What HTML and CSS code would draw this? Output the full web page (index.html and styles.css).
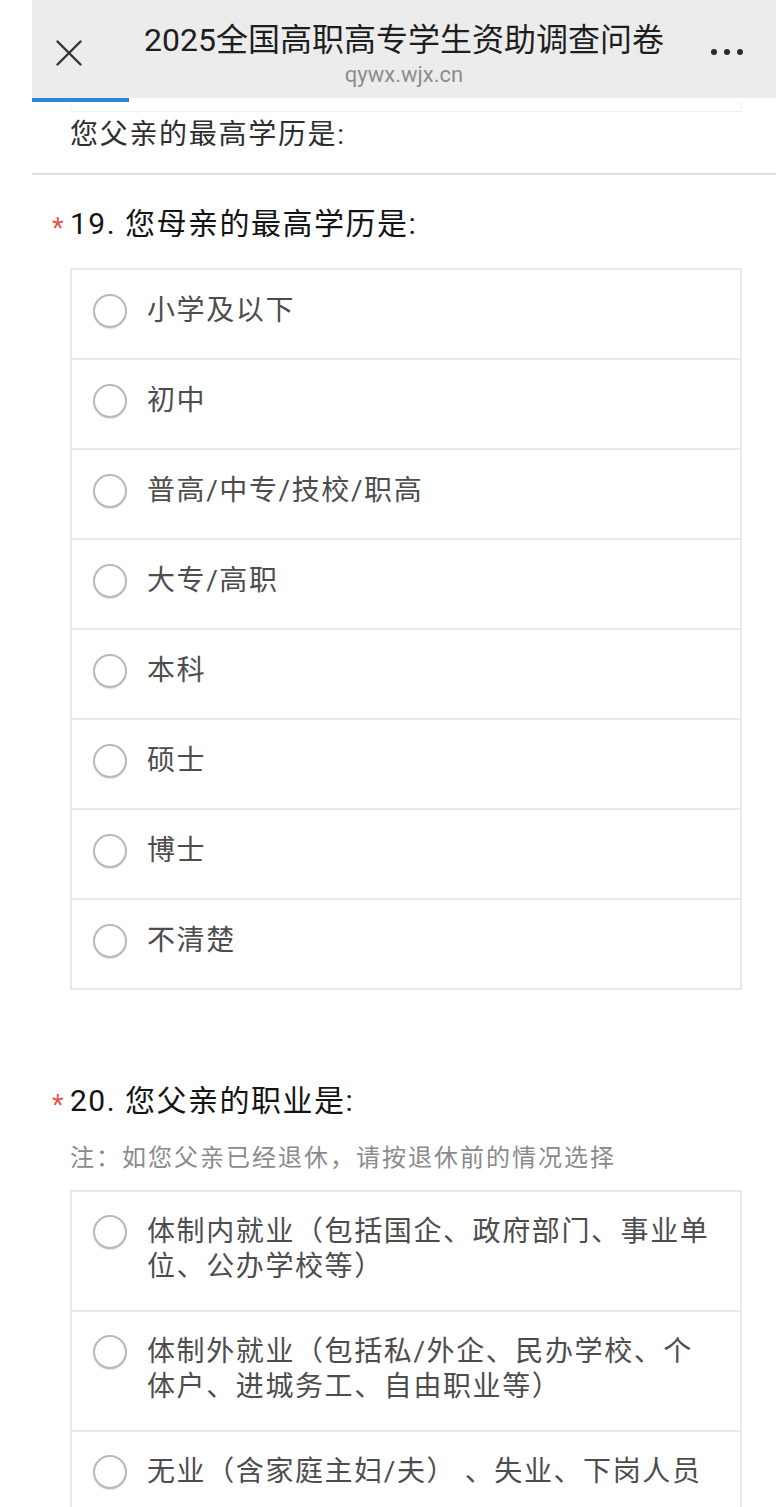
FILE: index.html
```html
<!DOCTYPE html>
<html lang="zh-CN">
<head>
<meta charset="utf-8">
<title>2025全国高职高专学生资助调查问卷</title>
<link rel="stylesheet" href="styles.css">
</head>
<body>
<div class="page">
  <header class="topbar">
    <div class="topbar-left">
      <svg class="close-icon" width="26" height="26" viewBox="0 0 26 26"><path d="M1.5 1.5 L24.5 24.5 M24.5 1.5 L1.5 24.5" stroke="#333" stroke-width="2.4" stroke-linecap="round" fill="none"/></svg>
    </div>
    <div class="topbar-center">
      <div class="topbar-title">2025全国高职高专学生资助调查问卷</div>
      <div class="topbar-url">qywx.wjx.cn</div>
    </div>
    <div class="topbar-right">
      <span class="dot"></span><span class="dot"></span><span class="dot"></span>
    </div>
  </header>
  <div class="progress"><div class="progress-fill"></div></div>

  <div class="sticky-title">
    <div class="prev-card"></div>
    <div class="sticky-text">您父亲的最高学历是:</div>
  </div>

  <section class="question q19">
    <h2 class="q-title"><span class="star">*</span><span>19. 您母亲的最高学历是:</span></h2>
    <ul class="options">
      <li class="opt"><span class="radio"></span><span class="opt-text">小学及以下</span></li>
      <li class="opt"><span class="radio"></span><span class="opt-text">初中</span></li>
      <li class="opt"><span class="radio"></span><span class="opt-text">普高/中专/技校/职高</span></li>
      <li class="opt"><span class="radio"></span><span class="opt-text">大专/高职</span></li>
      <li class="opt"><span class="radio"></span><span class="opt-text">本科</span></li>
      <li class="opt"><span class="radio"></span><span class="opt-text">硕士</span></li>
      <li class="opt"><span class="radio"></span><span class="opt-text">博士</span></li>
      <li class="opt"><span class="radio"></span><span class="opt-text">不清楚</span></li>
    </ul>
  </section>

  <section class="question q20">
    <h2 class="q-title"><span class="star">*</span><span>20. 您父亲的职业是:</span></h2>
    <p class="q-note">注：如您父亲已经退休，请按退休前的情况选择</p>
    <ul class="options options-long">
      <li class="opt"><span class="radio"></span><span class="opt-text">体制内就业（包括国企、政府部门、事业单位、公办学校等）</span></li>
      <li class="opt"><span class="radio"></span><span class="opt-text">体制外就业（包括私/外企、民办学校、个体户、进城务工、自由职业等）</span></li>
      <li class="opt"><span class="radio"></span><span class="opt-text">无业（含家庭主妇/夫） 、失业、下岗人员</span></li>
    </ul>
  </section>
</div>
</body>
</html>
```

FILE: styles.css
```css
* { box-sizing: border-box; }

html, body {
  margin: 0;
  padding: 0;
  background: #ffffff;
}

body {
  font-family: Roboto, "Noto Sans CJK SC", "Noto Sans", sans-serif;
  color: #1a1a1a;
}

.page {
  margin-left: 32px;
  width: 744px;
}

/* top bar */
.topbar {
  height: 98px;
  background: #ececec;
  display: grid;
  grid-template-columns: 100px 1fr 100px;
}

.topbar-left {
  display: flex;
  align-items: center;
  padding: 8px 0 0 24px;
}

.close-icon { display: block; }

.topbar-center {
  text-align: center;
  padding-top: 19px;
  white-space: nowrap;
}

.topbar-title {
  font-size: 32px;
  line-height: 42px;
  color: #1e1e1e;
}

.topbar-url {
  font-size: 22px;
  line-height: 28px;
  color: #8c8c8c;
}

.topbar-right {
  display: flex;
  justify-content: flex-end;
  align-items: center;
  gap: 7px;
  padding: 6px 33px 0 0;
}

.dot {
  width: 6px;
  height: 6px;
  border-radius: 50%;
  background: #2a2a2a;
}

/* progress */
.progress {
  height: 4px;
  background: #ffffff;
}

.progress-fill {
  width: 97px;
  height: 4px;
  background: #2b88d8;
}

/* floating previous title */
.sticky-title {
  padding: 0 34px 20px 38px;
  border-bottom: 2px solid #dedede;
}

.prev-card {
  height: 10px;
  border: 1px solid #f0f0f0;
  border-top: none;
}

.sticky-text {
  margin-top: 5px;
  font-size: 28px;
  line-height: 36px;
  letter-spacing: 1.7px;
  color: #2e2e2e;
}

/* questions */
.question {
  padding: 0 34px 0 38px;
}

.q19 { padding-top: 29px; }
.q20 { padding-top: 91px; }

.q-title {
  display: flex;
  margin: 0;
  font-size: 30px;
  line-height: 40px;
  font-weight: 400;
  letter-spacing: 1.5px;
  color: #141414;
}

.star {
  width: 18px;
  margin-left: -18px;
  flex: none;
  align-self: flex-start;
  font-size: 27px;
  line-height: 1;
  padding-top: 11px;
  letter-spacing: 0;
  color: #e8534d;
}

.q-note {
  margin: 20px 0 0;
  font-size: 24px;
  line-height: 34px;
  letter-spacing: 2px;
  color: #8a8a8a;
}

.options {
  list-style: none;
  margin: 24px 0 0;
  padding: 0;
  border: 2px solid #e8e8e8;
}

.q20 .options { margin-top: 15px; }

.opt {
  display: flex;
  align-items: flex-start;
  padding: 23px 25px 30px 21px;
  border-top: 2px solid #e8e8e8;
}

.opt:first-child { border-top: none; }

.options-long .opt {
  padding: 22px 25px 26px 21px;
}

.radio {
  flex: none;
  width: 34px;
  height: 34px;
  margin-top: 0.5px;
  margin-right: 20px;
  border-radius: 50%;
  border: 2px solid #b9b9b9;
  background: #ffffff;
  box-shadow: 0 1px 1px rgba(0, 0, 0, 0.12);
}

.opt-text {
  flex: 1;
  font-size: 28px;
  line-height: 35px;
  letter-spacing: 1.6px;
  color: #4d4d4d;
}
```
